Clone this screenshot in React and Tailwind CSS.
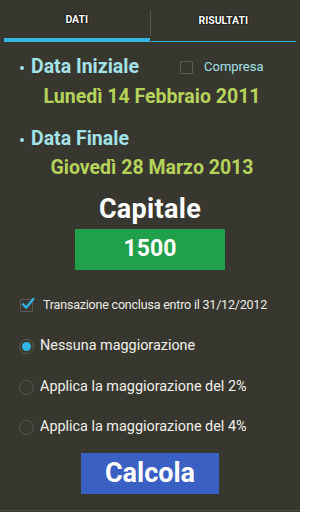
import React from "react";

export default function App() {
  const font = { fontFamily: "Roboto, 'Liberation Sans', sans-serif" };
  return (
    <div className="w-[300px] h-[512px] bg-[#38372f] flex flex-col overflow-hidden" style={font}>
      {/* Tabs */}
      <div className="mx-[4px] h-[42px] flex">
        <div className="flex-1 flex flex-col">
          <div className="flex-1 flex items-center justify-center pt-[1px] text-[10.5px] font-bold text-white [text-shadow:0_0_2px_#000,0_0_1px_#000,0_0_1px_#000]">
            DATI
          </div>
          <div className="h-[4px] bg-[#33b5e5]" />
        </div>
        <div className="w-px bg-[#55554d] mt-[10px] mb-[6px]" />
        <div className="flex-1 flex flex-col">
          <div className="flex-1 flex items-center justify-center pt-[1px] text-[10.5px] font-bold text-white [text-shadow:0_0_2px_#000,0_0_1px_#000,0_0_1px_#000]">
            RISULTATI
          </div>
          <div className="h-[1.5px] bg-[#33b5e5]" />
        </div>
      </div>

      {/* Data Iniziale */}
      <div className="flex items-center h-[24px] mt-[13px] pl-[20px]">
        <div className="w-[160px] flex items-center">
          <div className="w-[4px] h-[4px] rounded-full bg-[#a3e2e8] mt-[2px]" />
          <span className="ml-[7px] text-[#a3e2e8] text-[19.5px] font-bold">Data Iniziale</span>
        </div>
        <div className="w-[13px] h-[13px] border-[1.5px] border-[#5c5b53] rounded-[1px]" />
        <span className="ml-[11px] text-[#a3e2e8] text-[13px]">Compresa</span>
      </div>
      <div className="h-[24px] mt-[6px] flex items-center justify-center pl-[4px] text-[#b5d35a] text-[19.5px] font-bold">
        Lunedì 14 Febbraio 2011
      </div>

      {/* Data Finale */}
      <div className="flex items-center h-[24px] mt-[18px] pl-[20px]">
        <div className="w-[4px] h-[4px] rounded-full bg-[#a3e2e8] mt-[2px]" />
        <span className="ml-[7px] text-[#a3e2e8] text-[19.5px] font-bold">Data Finale</span>
      </div>
      <div className="h-[24px] mt-[5px] flex items-center justify-center pl-[4px] text-[#b5d35a] text-[19.5px] font-bold">
        Giovedì 28 Marzo 2013
      </div>

      {/* Capitale */}
      <div className="h-[30px] mt-[14px] flex items-center justify-center text-white text-[27px] font-bold tracking-[0.3px]">
        Capitale
      </div>
      <div className="mt-[5px] mx-auto w-[150px] h-[41px] bg-[#21a04b] flex items-center justify-center text-white text-[23px] font-bold">
        1500
      </div>

      {/* Checkbox */}
      <div className="mt-[28px] h-[14px] flex items-center pl-[20px]">
        <div className="relative w-[13px] h-[13px] border-[1.5px] border-[#5c5b53] rounded-[1px]">
          <svg viewBox="0 0 16 16" className="absolute left-[0px] top-[-3px] w-[14px] h-[14px]">
            <path d="M2.5 8.5 L6 12 L14 2.5" fill="none" stroke="#33b5e5" strokeWidth="2.6" strokeLinecap="square" />
          </svg>
        </div>
        <span className="ml-[10px] text-[#ecece6] text-[12.5px] tracking-[-0.2px]">Transazione conclusa entro il 31/12/2012</span>
      </div>

      {/* Radios */}
      {[
        { label: "Nessuna maggiorazione", on: true, cls: "mt-[24px]" },
        { label: "Applica la maggiorazione del 2%", on: false, cls: "mt-[21px]" },
        { label: "Applica la maggiorazione del 4%", on: false, cls: "mt-[20px]" },
      ].map((r, i) => (
        <div key={i} className={`h-[20px] flex items-center pl-[19px] ${r.cls}`}>
          <div className="w-[15px] h-[15px] rounded-full border border-[#5c5b53] flex items-center justify-center">
            {r.on && <div className="w-[9px] h-[9px] rounded-full bg-[#33b5e5]" />}
          </div>
          <span className="ml-[6px] text-[#f0f0ea] text-[14.4px]">{r.label}</span>
        </div>
      ))}

      {/* Calcola */}
      <div className="mt-[16px] mx-auto w-[138px] h-[41px] bg-[#3a60c4] flex items-center justify-center text-white text-[27px] font-bold">
        Calcola
      </div>

      <div className="flex-1" />
      <div className="h-px bg-[#4e4d45] mb-[1px]" />
    </div>
  );
}
